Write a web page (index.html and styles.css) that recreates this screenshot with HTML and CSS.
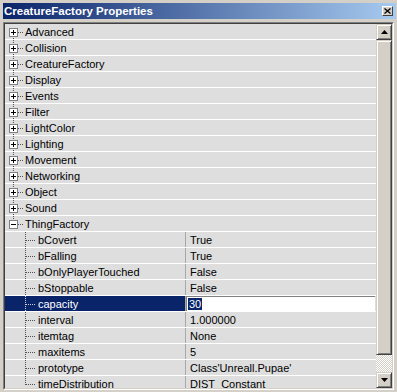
FILE: index.html
```html
<!DOCTYPE html>
<html lang="en">
<head>
  <meta charset="UTF-8"/>
  <title>CreatureFactory Properties</title>
  <link rel="stylesheet" href="styles.css">
</head>
<body>

  <div class="window">
    <div class="titlebar">
      <span class="title">CreatureFactory Properties</span>
      <div class="close">
        <svg width="7" height="6" viewBox="0 0 7 6"><path d="M0.5 0.5 L6.5 5.5 M6.5 0.5 L0.5 5.5" stroke="#000" stroke-width="1.3"/></svg>
      </div>
    </div>

    <div class="panel">
      <div class="panel-inner">

        <!-- Property tree -->
        <div class="list">
          <div class="row"><div class="name"><span class="tree first"><span class="box plus"></span></span>Advanced</div></div>
          <div class="row"><div class="name"><span class="tree"><span class="box plus"></span></span>Collision</div></div>
          <div class="row"><div class="name"><span class="tree"><span class="box plus"></span></span>CreatureFactory</div></div>
          <div class="row"><div class="name"><span class="tree"><span class="box plus"></span></span>Display</div></div>
          <div class="row"><div class="name"><span class="tree"><span class="box plus"></span></span>Events</div></div>
          <div class="row"><div class="name"><span class="tree"><span class="box plus"></span></span>Filter</div></div>
          <div class="row"><div class="name"><span class="tree"><span class="box plus"></span></span>LightColor</div></div>
          <div class="row"><div class="name"><span class="tree"><span class="box plus"></span></span>Lighting</div></div>
          <div class="row"><div class="name"><span class="tree"><span class="box plus"></span></span>Movement</div></div>
          <div class="row"><div class="name"><span class="tree"><span class="box plus"></span></span>Networking</div></div>
          <div class="row"><div class="name"><span class="tree"><span class="box plus"></span></span>Object</div></div>
          <div class="row"><div class="name"><span class="tree"><span class="box plus"></span></span>Sound</div></div>
          <div class="row"><div class="name"><span class="tree last"><span class="box"></span></span>ThingFactory</div></div>

          <div class="row prop"><div class="name"><span class="tree child"></span>bCovert</div><div class="value">True</div></div>
          <div class="row prop"><div class="name"><span class="tree child"></span>bFalling</div><div class="value">True</div></div>
          <div class="row prop"><div class="name"><span class="tree child"></span>bOnlyPlayerTouched</div><div class="value">False</div></div>
          <div class="row prop"><div class="name"><span class="tree child"></span>bStoppable</div><div class="value">False</div></div>
          <div class="row prop selected"><div class="name"><span class="tree child"></span>capacity</div><div class="value edit"><span class="sel">30</span></div></div>
          <div class="row prop"><div class="name"><span class="tree child"></span>interval</div><div class="value">1.000000</div></div>
          <div class="row prop"><div class="name"><span class="tree child"></span>itemtag</div><div class="value">None</div></div>
          <div class="row prop"><div class="name"><span class="tree child"></span>maxitems</div><div class="value">5</div></div>
          <div class="row prop"><div class="name"><span class="tree child"></span>prototype</div><div class="value">Class'Unreall.Pupae'</div></div>
          <div class="row prop"><div class="name"><span class="tree child last"></span>timeDistribution</div><div class="value">DIST_Constant</div></div>
        </div>

        <!-- Scrollbar -->
        <div class="scrollbar">
          <div class="sb-btn"><svg width="7" height="4" viewBox="0 0 7 4"><polygon points="3.5,0 7,4 0,4" fill="#000"/></svg></div>
          <div class="sb-thumb"></div>
          <div class="sb-track"></div>
          <div class="sb-btn"><svg width="7" height="4" viewBox="0 0 7 4"><polygon points="0,0 7,0 3.5,4" fill="#000"/></svg></div>
        </div>

      </div>
    </div>
  </div>

</body>
</html>
```

FILE: styles.css
```css
body {
  margin: 0;
  background: #d4d0c8;
  font-family: "Liberation Sans", Arial, sans-serif;
  font-size: 11px;
  width: 397px;
  height: 392px;
  overflow: hidden;
}

.window { padding: 3px 1px 0 3px; }

.titlebar {
  height: 16px;
  display: flex;
  align-items: center;
  justify-content: space-between;
  padding: 0 3px 0 1px;
  background: linear-gradient(to right, #0a246a, #a6caf0);
  color: #fff;
}
.title { font-weight: bold; font-size: 11.5px; }
.close {
  width: 9px;
  height: 8px;
  display: flex;
  align-items: center;
  justify-content: center;
  background: #d4d0c8;
  border: 1px solid;
  border-color: #fff #404040 #404040 #fff;
}

.panel {
  margin: 3px 2px 0 0;
  border: 1px solid;
  border-color: #808080 #fff #fff #808080;
}
.panel-inner {
  display: flex;
  height: 364px;
  border: 1px solid;
  border-color: #404040 #d4d0c8 #d4d0c8 #404040;
}

.list { flex: 1; overflow: hidden; }

.row {
  --ln: #505050;
  display: flex;
  height: 15px;
  line-height: 16px;
  background: #dedede;
  border-bottom: 1px solid #fff;
  white-space: nowrap;
  overflow: hidden;
}
.name { flex: 1; display: flex; }
.prop .name { flex: none; width: 180px; border-right: 1px solid #a8a8a8; }
.value { flex: 1; padding-left: 4px; }

.selected .name { background: #0a246a; color: #fff; --ln: #d0d0d0; }
.value.edit {
  background: #fff;
  padding-left: 1px;
  margin-right: 1px;
  line-height: 14px;
  border-top: 1px solid #808080;
  border-left: 1px solid #808080;
}
.sel { background: #0a246a; color: #fff; padding: 0 1px; }

/* tree connector lines */
.tree {
  width: 20px;
  height: 15px;
  flex-shrink: 0;
  background:
    repeating-linear-gradient(to right, var(--ln) 0 1px, transparent 1px 2px) 13px 8px / 6px 1px no-repeat,
    repeating-linear-gradient(to bottom, var(--ln) 0 1px, transparent 1px 2px) 8px 0 / 1px 15px no-repeat;
}
.tree.first {
  background:
    repeating-linear-gradient(to right, var(--ln) 0 1px, transparent 1px 2px) 13px 8px / 6px 1px no-repeat,
    repeating-linear-gradient(to bottom, var(--ln) 0 1px, transparent 1px 2px) 8px 8px / 1px 7px no-repeat;
}
.tree.last {
  background:
    repeating-linear-gradient(to right, var(--ln) 0 1px, transparent 1px 2px) 13px 8px / 6px 1px no-repeat,
    repeating-linear-gradient(to bottom, var(--ln) 0 1px, transparent 1px 2px) 8px 0 / 1px 8px no-repeat;
}
.tree.child {
  width: 33px;
  background:
    repeating-linear-gradient(to right, var(--ln) 0 1px, transparent 1px 2px) 21px 8px / 10px 1px no-repeat,
    repeating-linear-gradient(to bottom, var(--ln) 0 1px, transparent 1px 2px) 20px 0 / 1px 15px no-repeat;
}
.tree.child.last {
  background:
    repeating-linear-gradient(to right, var(--ln) 0 1px, transparent 1px 2px) 21px 8px / 10px 1px no-repeat,
    repeating-linear-gradient(to bottom, var(--ln) 0 1px, transparent 1px 2px) 20px 0 / 1px 9px no-repeat;
}
.box {
  display: block;
  width: 7px;
  height: 7px;
  margin: 4px 0 0 4px;
  border: 1px solid #808080;
  background: linear-gradient(#000, #000) center / 5px 1px no-repeat, #fff;
}
.box.plus {
  background:
    linear-gradient(#000, #000) center / 5px 1px no-repeat,
    linear-gradient(#000, #000) center / 1px 5px no-repeat,
    #fff;
}

/* scrollbar */
.scrollbar { width: 16px; display: flex; flex-direction: column; }
.sb-btn, .sb-thumb {
  box-sizing: border-box;
  background: #d4d0c8;
  border: 1px solid;
  border-color: #d4d0c8 #404040 #404040 #d4d0c8;
  box-shadow: inset 1px 1px #fff, inset -1px -1px #808080;
}
.sb-btn { height: 16px; display: flex; align-items: center; justify-content: center; }
.sb-thumb { height: 315px; }
.sb-track {
  height: 17px;
  background: repeating-conic-gradient(#fff 0 25%, #d4d0c8 0 50%) 0 0 / 2px 2px;
}
```
